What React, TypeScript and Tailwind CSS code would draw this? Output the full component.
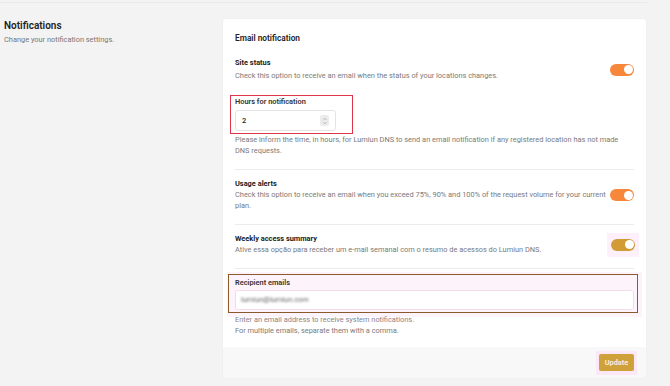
import { ChevronUp, ChevronDown } from "lucide-react";

const Toggle = ({ color = "bg-[#f7873a]" }: { color?: string }) => (
  <div className={`relative h-[12px] w-[24px] shrink-0 rounded-full ${color}`}>
    <div className="absolute right-[1.5px] top-[1.5px] h-[9px] w-[9px] rounded-full bg-white" />
  </div>
);

const Divider = () => <div className="h-px bg-[#ececec]" />;

const App = () => {
  return (
    <div className="min-h-screen bg-[#f3f3f3] font-['Roboto',sans-serif] text-[#222]">
      {/* end of previous section */}
      <div className="h-[3px] w-[647px] border-b border-[#e9e9e9]" />

      <div className="flex">
        {/* Left column */}
        <div className="w-[223px] shrink-0 pl-[4px] pt-[16px]">
          <h2 className="text-[10px] font-semibold leading-[14px] text-[#1f1f1f]">Notifications</h2>
          <p className="mt-[2px] text-[7.4px] leading-[10px] text-[#777]">Change your notification settings.</p>
        </div>

        {/* Card */}
        <div className="mt-[16px] w-[423px] overflow-hidden rounded-[3px] bg-white shadow-[0_0_2px_rgba(0,0,0,0.06)]">
          <div className="px-[12px] pb-[11px] pt-[13px]">
            <h3 className="text-[8.3px] font-semibold leading-[12px] text-[#222]">Email notification</h3>

            {/* Site status */}
            <div className="mt-[14px] flex items-center justify-between">
              <div>
                <div className="text-[7.4px] font-bold leading-[10px]">Site status</div>
                <div className="mt-[2px] text-[7.4px] leading-[11px] text-[#7a7a7a]">
                  Check this option to receive an email when the status of your locations changes.
                </div>
              </div>
              <Toggle />
            </div>

            {/* Hours for notification */}
            <div className="-ml-[5px] mt-[14px] w-[123px] border-[1.5px] border-[#e0344b] px-[4px] pb-[2px] pt-[1px]">
              <div className="text-[7.4px] font-semibold leading-[10px] text-[#333]">Hours for notification</div>
              <div className="mt-[3px] flex h-[21px] w-[101px] items-center justify-between rounded-[3px] border border-[#e3e3e3] pl-[6px] pr-[6px]">
                <span className="text-[7.4px] font-medium">2</span>
                <div className="flex h-[11px] w-[9px] flex-col items-center justify-center rounded-[2px] bg-[#ececec] text-[#999]">
                  <ChevronUp size={6} strokeWidth={2.5} className="-mb-[1px]" />
                  <ChevronDown size={6} strokeWidth={2.5} className="-mt-[1px]" />
                </div>
              </div>
            </div>
            <p className="whitespace-nowrap text-[7.4px] leading-[11px] text-[#7a7a7a]">
              Please inform the time, in hours, for Lumiun DNS to send an email notification if any registered location has not made
              <br />
              DNS requests.
            </p>

            <div className="mt-[13px]">
              <Divider />
            </div>

            {/* Usage alerts */}
            <div className="mt-[9px] flex items-center justify-between">
              <div>
                <div className="text-[7.4px] font-bold leading-[10px]">Usage alerts</div>
                <div className="whitespace-nowrap text-[7.4px] leading-[11px] text-[#7a7a7a]">
                  Check this option to receive an email when you exceed 75%, 90% and 100% of the request volume for your current
                  <br />
                  plan.
                </div>
              </div>
              <Toggle />
            </div>

            <div className="mt-[13px]">
              <Divider />
            </div>

            {/* Weekly access summary */}
            <div className="mt-[9px] flex items-center justify-between">
              <div>
                <div className="text-[7.4px] font-bold leading-[10px]">Weekly access summary</div>
                <div className="text-[7.4px] leading-[11px] text-[#7a7a7a]">
                  Ative essa opção para receber um e-mail semanal com o resumo de acessos do Lumiun DNS.
                </div>
              </div>
              <div className="-my-[4px] -mr-[5px] flex h-[24px] w-[32px] items-center justify-center bg-[#fdf0fb]">
                <Toggle color="bg-[#d29b35]" />
              </div>
            </div>

            <div className="mt-[13px]">
              <Divider />
            </div>

            {/* Recipient emails */}
            <div className="-mx-[8px] mt-[3px] bg-[#fdf3fb] pb-[4px] pl-[1px] pt-[2px]">
              <div className="mr-[4px] border border-[#8a5a2c] pb-[2px] pl-[6px] pr-[3px] pt-[3px]">
                <div className="text-[7.4px] font-semibold leading-[10px] text-[#333]">Recipient emails</div>
                <div className="mt-[2px] flex h-[20px] items-center rounded-[3px] border border-[#f3dcea] bg-white pl-[5px]">
                  <span className="text-[7.4px] text-[#666] blur-[1.2px]">lumiun@lumiun.com</span>
                </div>
              </div>
            </div>
            <p className="-mt-[3px] text-[7.4px] leading-[11px] text-[#8a7f86]">
              Enter an email address to receive system notifications.
            </p>
            <p className="text-[7.4px] leading-[11px] text-[#7a7a7a]">For multiple emails, separate them with a comma.</p>
          </div>

          {/* Footer */}
          <div className="flex h-[31px] items-center justify-end bg-[#f8f8f8] pr-[9px]">
            <div className="flex h-[24px] w-[41px] items-center justify-center bg-[#fde8f7]">
              <button className="h-[17px] w-[35px] rounded-[2px] bg-[#cfa13b] text-[7.4px] font-bold text-[#fde8de]">
                Update
              </button>
            </div>
          </div>
        </div>
      </div>
    </div>
  );
};

export default App;
